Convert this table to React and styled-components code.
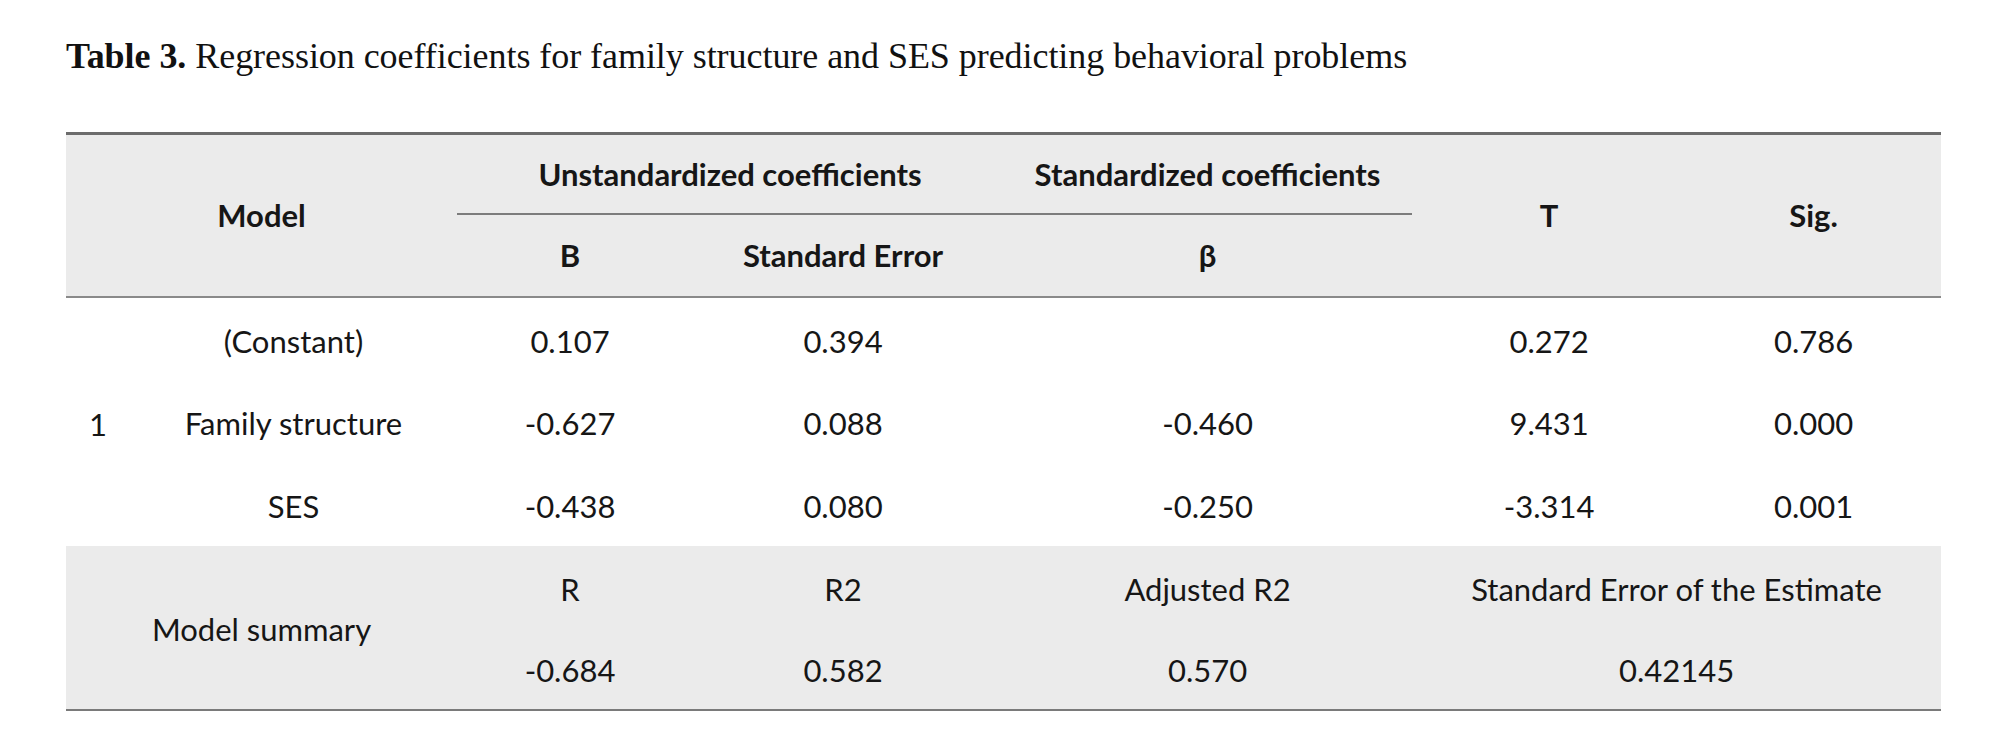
import React from "react";
import styled, { createGlobalStyle } from "styled-components";

const GlobalStyle = createGlobalStyle`
  html, body {
    margin: 0;
    padding: 0;
    background: #ffffff;
  }
`;

const Page = styled.div`
  width: 2000px;
  height: 733px;
  box-sizing: border-box;
  padding: 34px 59px 0 66px;
  background: #fff;
`;

const Caption = styled.p`
  margin: 0 0 54px 0;
  font-family: "Liberation Serif", "Times New Roman", serif;
  font-size: 36px;
  line-height: 44px;
  color: #111;
  letter-spacing: -0.05px;

  b {
    font-weight: 700;
  }
`;

const Table = styled.table`
  width: 1875px;
  border-collapse: collapse;
  table-layout: fixed;
  font-family: Lato, "Open Sans", sans-serif;
  color: #161616;
  border-top: 3px solid #6c6c6c;
  border-bottom: 2px solid #7a7a7a;
`;

const Head = styled.thead`
  background: #ebebeb;
  border-bottom: 2px solid #8a8a8a;
`;

const Summary = styled.tbody`
  background: #ebebeb;
`;

const Row = styled.tr`
  height: ${(p) => p.$h}px;
`;

const Th = styled.th`
  padding: 0;
  font-size: 31px;
  font-weight: 700;
  text-align: center;
  vertical-align: middle;
  border-bottom: ${(p) => (p.$rule ? "2px solid #7c7c7c" : "none")};
`;

const Td = styled.td`
  padding: 4px 0 0 0;
  font-size: 31px;
  font-weight: 400;
  text-align: center;
  vertical-align: middle;
`;

const widths = [64, 327, 226, 320, 409, 274, 255];

const body = [
  ["(Constant)", "0.107", "0.394", "", "0.272", "0.786"],
  ["Family structure", "-0.627", "0.088", "-0.460", "9.431", "0.000"],
  ["SES", "-0.438", "0.080", "-0.250", "-3.314", "0.001"],
];

export default function App() {
  return (
    <Page>
      <GlobalStyle />
      <Caption>
        <b>Table 3.</b> Regression coefficients for family structure and SES
        predicting behavioral problems
      </Caption>
      <Table>
        <colgroup>
          {widths.map((w, i) => (
            <col key={i} style={{ width: w }} />
          ))}
        </colgroup>
        <Head>
          <Row $h={80}>
            <Th colSpan={2} rowSpan={2}>
              Model
            </Th>
            <Th colSpan={2} $rule>
              Unstandardized coefficients
            </Th>
            <Th $rule>Standardized coefficients</Th>
            <Th rowSpan={2}>T</Th>
            <Th rowSpan={2}>Sig.</Th>
          </Row>
          <Row $h={83}>
            <Th>B</Th>
            <Th>Standard Error</Th>
            <Th>β</Th>
          </Row>
        </Head>
        <tbody>
          {body.map((r, i) => (
            <Row $h={83} key={r[0]}>
              {i === 0 && <Td rowSpan={3}>1</Td>}
              {r.map((c, j) => (
                <Td key={j}>{c}</Td>
              ))}
            </Row>
          ))}
        </tbody>
        <Summary>
          <Row $h={82}>
            <Td colSpan={2} rowSpan={2}>
              Model summary
            </Td>
            <Td>R</Td>
            <Td>R2</Td>
            <Td>Adjusted R2</Td>
            <Td colSpan={2}>Standard Error of the Estimate</Td>
          </Row>
          <Row $h={82}>
            <Td>-0.684</Td>
            <Td>0.582</Td>
            <Td>0.570</Td>
            <Td colSpan={2}>0.42145</Td>
          </Row>
        </Summary>
      </Table>
    </Page>
  );
}
